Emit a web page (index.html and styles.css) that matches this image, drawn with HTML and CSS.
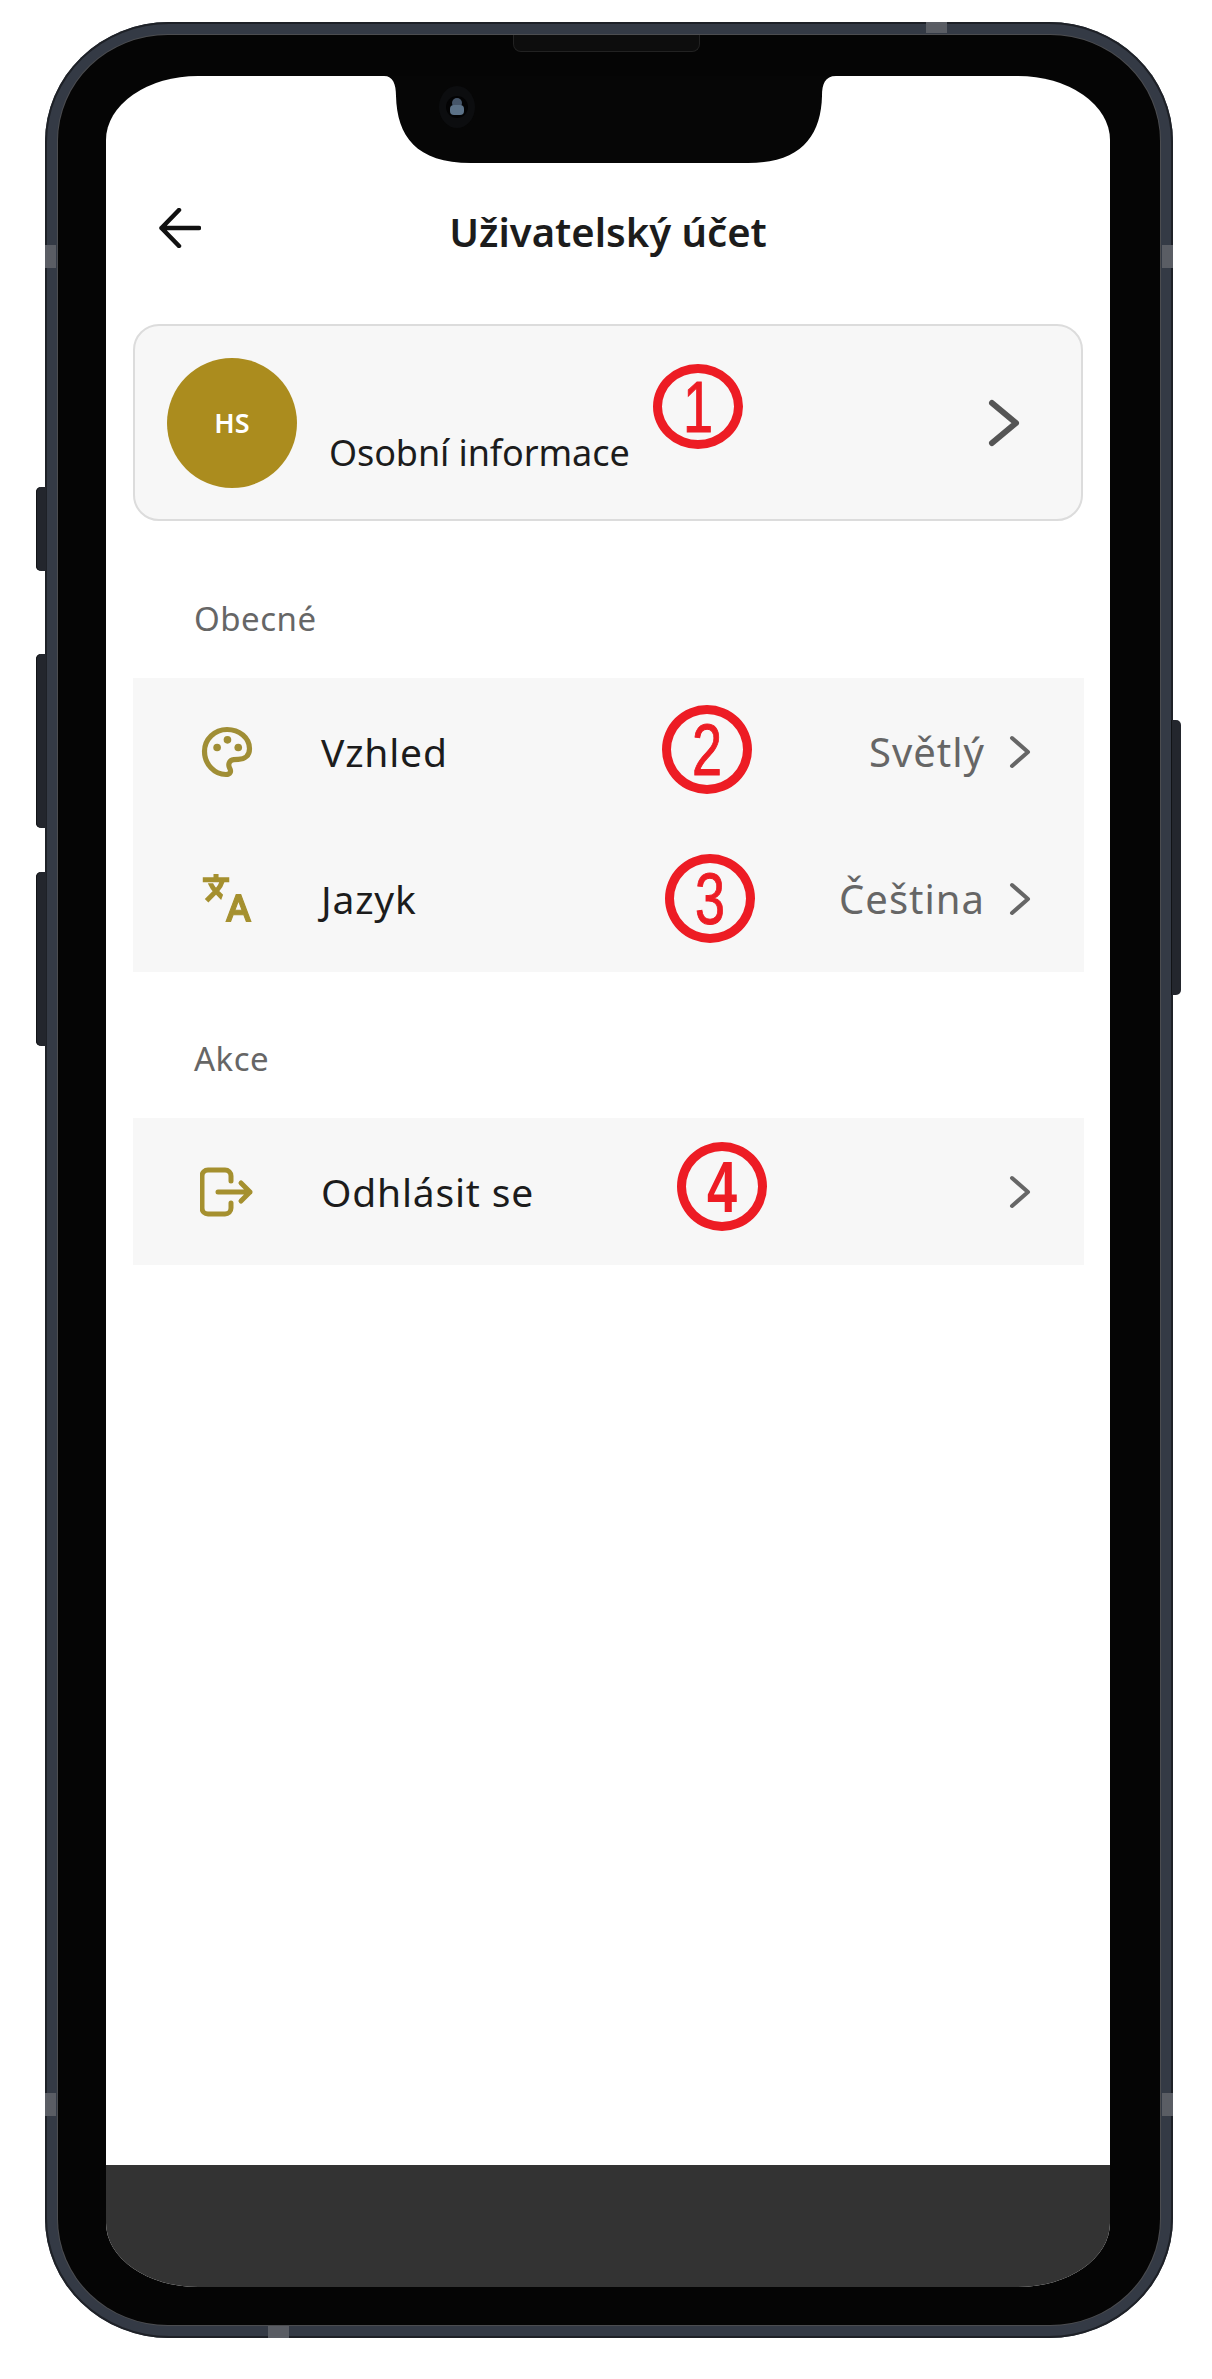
FILE: index.html
```html
<html>
<head>
    <title>Uživatelský účet</title>
    <meta charset="utf-8" />
    <link rel="stylesheet" href="styles.css">
</head>
<body>
<div class="phone">
    <div class="btn btn-mute"></div>
    <div class="btn btn-up"></div>
    <div class="btn btn-down"></div>
    <div class="btn btn-power"></div>
    <div class="band band-top"></div>
    <div class="band band-bottom"></div>
    <div class="band band-lt"></div>
    <div class="band band-rt"></div>
    <div class="band band-lb"></div>
    <div class="band band-rb"></div>
    <div class="bezel">
        <div class="speaker"></div>
        <div class="screen">
            <svg class="notch" viewBox="0 0 1004 90">
                <path d="M278 0C287 0 290 8 290 20C291 60 310 87 365 87L642 87C695 87 715 60 716 20C716 8 719 0 730 0Z" fill="#060606"/>
                <ellipse cx="351" cy="31" rx="18" ry="21" fill="#0c0d0f"/>
                <circle cx="351" cy="31" r="11" fill="#030304"/>
                <circle cx="351" cy="27" r="5" fill="#46566a"/>
                <rect x="344" y="29" width="14" height="10" rx="4" fill="#5c7288"/>
            </svg>

            <header class="topbar">
                <svg class="back" viewBox="0 0 42 40" fill="none" stroke="#111" stroke-width="4.5" stroke-linecap="round" stroke-linejoin="round">
                    <path d="M2.500 20H40M20 2L2.500 20L20 38"/>
                </svg>
                <h1 class="title">Uživatelský účet</h1>
            </header>

            <div class="card">
                <div class="avatar">HS</div>
                <div class="card-text">Osobní informace</div>
                <svg class="chev chev-big" viewBox="0 0 32 48" fill="none" stroke="#555" stroke-width="6" stroke-linecap="round" stroke-linejoin="round">
                    <path d="M4 4L28 24L4 44"/>
                </svg>
                <div class="marker marker-1"><span>1</span></div>
            </div>

            <div class="label label-general">Obecné</div>
            <div class="list">
                <div class="row">
                    <svg class="icon" viewBox="0 0 24 24" fill="none" stroke="#a08e35" stroke-width="2.300">
                        <path d="M12 2C6.500 2 2 6.300 2 11.700C2 17.500 6.500 22 11.500 22C13.500 22 14 20.600 13.200 19.200C12.400 17.800 12.800 15.600 15 15.400L17 15.300C20 15.200 22 13.500 22 10.500C22 5.800 17.500 2 12 2Z"/>
                        <circle cx="7.600" cy="10" r="1.700" fill="#a08e35" stroke="none"/>
                        <circle cx="12.200" cy="6.600" r="1.700" fill="#a08e35" stroke="none"/>
                        <circle cx="17" cy="10" r="1.700" fill="#a08e35" stroke="none"/>
                    </svg>
                    <span class="row-name">Vzhled</span>
                    <span class="row-value">Světlý</span>
                    <svg class="chev" viewBox="0 0 22 34" fill="none" stroke="#666" stroke-width="4" stroke-linecap="round" stroke-linejoin="round">
                        <path d="M3 3L19 17L3 31"/>
                    </svg>
                    <div class="marker marker-2"><span>2</span></div>
                </div>
                <div class="row">
                    <svg class="icon" viewBox="0 0 24 24" fill="#a5902f" stroke="#a5902f">
                        <path transform="translate(1 0) scale(0.68)" stroke-width="1.300" d="M12.870 15.070l-2.540-2.510.03-.03c1.740-1.940 2.980-4.170 3.710-6.530H17V4h-7V2H8v2H1v1.990h11.170C11.500 7.920 10.440 9.750 9 11.350 8.070 10.320 7.300 9.190 6.690 8h-2c.73 1.630 1.730 3.170 2.980 4.560l-5.090 5.020L4 19l5-5 3.110 3.110.76-2.040z"/>
                        <path transform="translate(-0.400 0)" stroke-width="0.500" d="M18.500 10h-2L12 22h2l1.120-3h4.750L21 22h2l-4.500-12zm-2.620 7l1.620-4.330L19.120 17h-3.240z"/>
                    </svg>
                    <span class="row-name">Jazyk</span>
                    <span class="row-value">Čeština</span>
                    <svg class="chev" viewBox="0 0 22 34" fill="none" stroke="#666" stroke-width="4" stroke-linecap="round" stroke-linejoin="round">
                        <path d="M3 3L19 17L3 31"/>
                    </svg>
                    <div class="marker marker-3"><span>3</span></div>
                </div>
            </div>

            <div class="label label-actions">Akce</div>
            <div class="list">
                <div class="row">
                    <svg class="icon" viewBox="0 0 54 48" fill="none" stroke="#a5902f" stroke-width="5" stroke-linecap="round" stroke-linejoin="round">
                        <path d="M31 13V8a6 6 0 0 0-6-6H8a6 6 0 0 0-6 6v32a6 6 0 0 0 6 6h17a6 6 0 0 0 6-6v-5"/>
                        <path d="M18 24H50M41 15L50 24L41 33"/>
                    </svg>
                    <span class="row-name">Odhlásit se</span>
                    <svg class="chev chev-end" viewBox="0 0 22 34" fill="none" stroke="#666" stroke-width="4" stroke-linecap="round" stroke-linejoin="round">
                        <path d="M3 3L19 17L3 31"/>
                    </svg>
                    <div class="marker marker-4"><span>4</span></div>
                </div>
            </div>

            <div class="bottom-bar"></div>
        </div>
    </div>
</div>
</body>
</html>
```

FILE: styles.css
```css
body {
    margin: 0;
    background: #fff;
    font-family: "Noto Sans", sans-serif;
    color: #1c1c1c;
}

/* device */
.phone {
    position: relative;
    box-sizing: border-box;
    width: 1128px;
    height: 2316px;
    margin: 22px 0 0 45px;
    padding: 13px;
    border-radius: 124px / 120px;
    background: #343a45;
    box-shadow: inset 0 0 0 2px #1e2127;
}

.btn {
    position: absolute;
    width: 10px;
    background: #23262d;
    box-shadow: inset 1px 0 0 #111316;
}

.btn-mute,
.btn-up,
.btn-down {
    left: -9px;
    border-radius: 5px 0 0 5px;
}

.btn-mute {
    top: 465px;
    height: 84px;
}

.btn-up {
    top: 632px;
    height: 174px;
}

.btn-down {
    top: 850px;
    height: 174px;
}

.btn-power {
    right: -8px;
    top: 698px;
    height: 275px;
    border-radius: 0 5px 5px 0;
}

.band {
    position: absolute;
    background: #5a5d64;
}

.band-top {
    left: 881px;
    top: 0;
    width: 21px;
    height: 11px;
}

.band-bottom {
    left: 223px;
    bottom: 0;
    width: 21px;
    height: 12px;
}

.band-lt,
.band-lb {
    left: 0;
    width: 11px;
    height: 23px;
}

.band-rt,
.band-rb {
    right: 0;
    width: 11px;
    height: 23px;
}

.band-lt,
.band-rt {
    top: 223px;
}

.band-lb,
.band-rb {
    top: 2071px;
}

.bezel {
    position: relative;
    box-sizing: border-box;
    height: 100%;
    padding: 41px 50px 38px 48px;
    border-radius: 110px / 106px;
    background: #050505;
    box-shadow: 0 0 0 1px #4c4d50;
}

.speaker {
    position: absolute;
    left: 455px;
    top: 0;
    width: 187px;
    height: 17px;
    box-sizing: border-box;
    border-radius: 0 0 8px 8px;
    background: #0d0d0d;
    border: 1px solid #222;
    border-top: 0;
}

.screen {
    position: relative;
    display: flex;
    flex-direction: column;
    height: 100%;
    overflow: hidden;
    background: #fff;
    border-radius: 92px / 64px;
}

.notch {
    position: absolute;
    left: 0;
    top: 0;
    width: 1004px;
    height: 90px;
}

/* app */
.topbar {
    display: flex;
    align-items: center;
    height: 60px;
    margin-top: 125px;
    padding-left: 53px;
}

.back {
    width: 42px;
    height: 40px;
    margin-top: -6px;
}

.title {
    flex: 1;
    margin: 0 95px 0 0;
    text-align: center;
    font-size: 40px;
    font-weight: 600;
}

.card {
    position: relative;
    display: flex;
    align-items: center;
    box-sizing: border-box;
    height: 197px;
    margin: 63px 27px 0;
    padding: 0 61px 0 32px;
    border: 2px solid #dcdcdc;
    border-radius: 26px;
    background: #f7f7f7;
}

.avatar {
    display: flex;
    align-items: center;
    justify-content: center;
    width: 130px;
    height: 130px;
    border-radius: 50%;
    background: #ab8c1e;
    color: #fff;
    font-size: 27px;
    font-weight: 600;
}

.card-text {
    margin: 60px 0 0 32px;
    font-size: 36px;
    letter-spacing: -0.1px;
}

.chev {
    width: 22px;
    height: 34px;
    margin-left: 24px;
}

.chev-big {
    width: 32px;
    height: 48px;
    margin-left: auto;
}

.chev-end {
    margin-left: auto;
}

.label {
    height: 48px;
    padding-left: 88px;
    line-height: 48px;
    font-size: 33px;
    letter-spacing: 0.5px;
    color: #666;
}

.label-general {
    margin: 74px 0 35px;
}

.label-actions {
    margin: 63px 0 35px;
}

.list {
    margin: 0 26px 0 27px;
    background: #f7f7f7;
}

.row {
    position: relative;
    display: flex;
    align-items: center;
    height: 147px;
    padding: 0 53px 0 67px;
}

.icon {
    width: 54px;
    height: 54px;
    flex: none;
}

.row-name {
    margin-left: 67px;
    font-size: 39px;
    letter-spacing: 0.8px;
}

.row-value {
    margin-left: auto;
    font-size: 40px;
    letter-spacing: 1px;
    color: #666;
}

.bottom-bar {
    height: 122px;
    margin-top: auto;
    background: #333;
}

/* red numbered annotations on top of the screenshot */
.marker {
    position: absolute;
    display: flex;
    align-items: center;
    justify-content: center;
    box-sizing: border-box;
    width: 90px;
    height: 89px;
    border: 9px solid #ed1c24;
    border-radius: 50%;
    color: #ed1c24;
    font-family: "Liberation Sans", sans-serif;
    font-size: 72px;
    -webkit-text-stroke: 1px #ed1c24;
}

.marker span {
    display: block;
    transform: scaleX(0.75);
}

.marker-1 {
    left: 518px;
    top: 38px;
    height: 85px;
}

.marker-2 {
    left: 529px;
    top: 27px;
}

.marker-3 {
    left: 532px;
    top: 29px;
}

.marker-4 {
    left: 544px;
    top: 24px;
    font-weight: 700;
    -webkit-text-stroke: 0;
}
```
